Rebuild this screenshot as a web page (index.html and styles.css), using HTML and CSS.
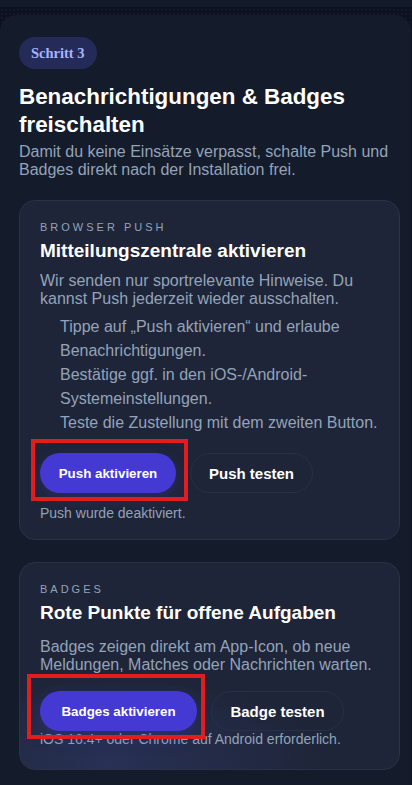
FILE: index.html
```html
<!DOCTYPE html>
<html>
	<head>
		<meta charset="utf-8" />
		<title>Benachrichtigungen</title>
		<link rel="stylesheet" href="styles.css">
	</head>
	<body>
		<div class="topbar"></div>
		<section class="step">
			<span class="step-tag">Schritt 3</span>
			<h1 class="step-title">Benachrichtigungen &amp; Badges freischalten</h1>
			<p class="step-lead">Damit du keine Einsätze verpasst, schalte Push und Badges direkt nach der Installation frei.</p>

			<div class="card">
				<div class="card-kicker">Browser Push</div>
				<h2 class="card-title">Mitteilungszentrale aktivieren</h2>
				<p class="card-text">Wir senden nur sportrelevante Hinweise. Du kannst Push jederzeit wieder ausschalten.</p>
				<ol class="steps">
					<li>Tippe auf „Push aktivieren“ und erlaube Benachrichtigungen.</li>
					<li>Bestätige ggf. in den iOS-/Android-Systemeinstellungen.</li>
					<li>Teste die Zustellung mit dem zweiten Button.</li>
				</ol>
				<div class="actions">
					<button class="btn btn-primary">Push aktivieren</button>
					<button class="btn btn-ghost">Push testen</button>
					<span class="mark mark-push"></span>
				</div>
				<p class="card-note">Push wurde deaktiviert.</p>
			</div>

			<div class="card card-glow">
				<div class="card-kicker">Badges</div>
				<h2 class="card-title">Rote Punkte für offene Aufgaben</h2>
				<p class="card-text card-text-wide">Badges zeigen direkt am App-Icon, ob neue Meldungen, Matches oder Nachrichten warten.</p>
				<div class="actions actions-tight">
					<button class="btn btn-primary btn-badge">Badges aktivieren</button>
					<button class="btn btn-ghost btn-badge-test">Badge testen</button>
					<span class="mark mark-badge"></span>
				</div>
				<p class="card-note card-note-up">iOS 16.4+ oder Chrome auf Android erforderlich.</p>
			</div>
		</section>
	</body>
</html>
```

FILE: styles.css
```css
*{
	padding: 0;
	margin: 0;
	box-sizing: border-box;
}
html,body{
	width: 100%;
	height: 100%;
}
body{
	overflow: hidden;
	background-color: #0b1120;
	background-image: radial-gradient(rgba(255,255,255,0.035) 1px, transparent 1px);
	background-size: 4px 4px;
	font-family: "Liberation Sans", Arial, sans-serif;
	color: #fff;
}
.topbar{
	height: 7px;
	background: #131a29;
	margin-bottom: 8px;
}
/* outer step panel */
.step{
	width: 411px;
	background: #141b2b;
	border-radius: 16px 16px 0 0;
	padding: 22px 11px 20px 19px;
}
.step-tag{
	display: inline-block;
	height: 32px;
	line-height: 32px;
	padding: 0 12px;
	border-radius: 16px;
	background: #252b59;
	color: #a5b4fc;
	font-family: "Liberation Serif", serif;
	font-weight: bold;
	font-size: 14.5px;
}
.step-title{
	margin-top: 14px;
	font-size: 22.4px;
	line-height: 28px;
	font-weight: bold;
}
.step-lead{
	margin-top: 4px;
	font-size: 16px;
	line-height: 18px;
	color: #94a3b8;
}
/* cards */
.card{
	margin-top: 21px;
	background: #1e2538;
	border: 1px solid #2a3246;
	border-radius: 16px;
	padding: 19px 20px 18px 20px;
	position: relative;
}
.card + .card{
	margin-top: 22px;
}
.card-glow{
	background: radial-gradient(ellipse 220px 90px at 90px 200px, rgba(60,70,140,0.35), transparent), #1e2538;
	padding-bottom: 22px;
}
.card-kicker{
	font-size: 11px;
	line-height: 14px;
	letter-spacing: 3px;
	text-transform: uppercase;
	color: #94a3b8;
}
.card-title{
	margin-top: 5px;
	font-size: 19px;
	line-height: 24px;
	font-weight: bold;
}
.card-text{
	margin-top: 9px;
	font-size: 16px;
	line-height: 18px;
	color: #94a3b8;
	padding-right: 10px;
}
.card-text-wide{
	margin-top: 13px;
	padding-right: 0;
}
.steps{
	list-style: none;
	margin-top: 7px;
	padding-left: 20px;
	font-size: 16px;
	line-height: 24px;
	color: #94a3b8;
}
.actions{
	display: flex;
	gap: 14px;
	margin-top: 18px;
	position: relative;
}
.actions-tight{
	margin-top: 17px;
}
.btn{
	height: 40px;
	border-radius: 20px;
	font-family: "Liberation Sans", Arial, sans-serif;
	font-weight: bold;
	font-size: 13.33px;
	color: #fff;
	cursor: pointer;
}
.btn-primary{
	width: 136px;
	border: none;
	background: #4539d4;
	box-shadow: 0 6px 16px rgba(70,60,210,0.25);
}
.btn-ghost{
	width: 123px;
	background: transparent;
	border: 1px solid #27304a;
	font-size: 15px;
}
.btn-badge{
	width: 157px;
}
.btn-badge-test{
	width: 133px;
}
.card-note{
	margin-top: 12px;
	font-size: 14px;
	line-height: 16px;
	color: #94a3b8;
}
.card-note-up{
	margin-top: 0;
}
/* red annotation frames */
.mark{
	position: absolute;
	border: 4px solid #e11d1d;
	pointer-events: none;
}
.mark-push{
	left: -9px;
	top: -14px;
	width: 157px;
	height: 62px;
}
.mark-badge{
	left: -13px;
	top: -17px;
	width: 178px;
	height: 65px;
}
```
